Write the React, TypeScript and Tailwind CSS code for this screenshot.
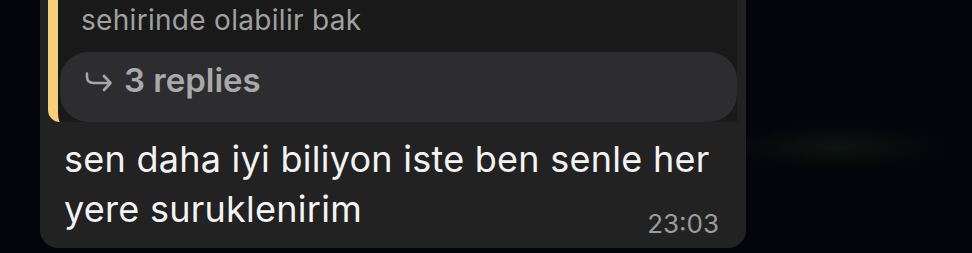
import React from "react";

function ReplyArrow() {
  return (
    <svg width="27" height="22" viewBox="0 0 27 22" fill="none" className="mt-[12px] shrink-0">
      <path
        d="M2 1.5V4.5Q2 11 8.5 11H25.5M19 4L25.5 11L19 18"
        stroke="#a6a6a8"
        strokeWidth="2.6"
        strokeLinecap="round"
        strokeLinejoin="round"
      />
    </svg>
  );
}

export default function App() {
  return (
    <div
      className="h-[253px] w-[972px] overflow-hidden flex flex-col justify-end pb-[5px] pl-[40px] bg-[radial-gradient(ellipse_110px_22px_at_86%_58%,#0e140f_0%,#04050a_100%)] bg-[#04050a]"
      style={{ fontFamily: "Inter, 'Noto Sans', sans-serif" }}
    >
      <div className="w-[706px] shrink-0 bg-[#222222] rounded-b-[18px] pt-[8px] pl-[8px] pr-[9px] pb-[8px]">
        {/* quoted message */}
        <div className="bg-[#191919] border-l-[10px] border-[#f6cd7a] rounded-bl-[12px] pt-[20px]">
          <div className="pl-[23px] h-[36px] leading-[36px] text-[28px] text-[#a0a0a0] tracking-[0.3px]">
            sehirinde olabilir bak
          </div>
          <div className="mt-[14px] ml-[2px] h-[70px] rounded-[28px] bg-[#2d2d2f] flex items-start pt-[8px] pl-[25px] gap-[12px]">
            <ReplyArrow />
            <span className="text-[33px] leading-[40px] font-semibold text-[#a9a9ab]">3 replies</span>
          </div>
        </div>

        {/* message body */}
        <p className="mt-[12px] pl-[16px] pr-[8px] text-[36px] leading-[50px] tracking-[0.26px] text-[#f3f3f3]">
          sen daha iyi biliyon iste ben senle her yere suruklenirim
        </p>
        <div className="-mt-[26px] pr-[18px] text-right text-[26px] leading-[32px] text-[#9b9b9b]">
          23:03
        </div>
      </div>
    </div>
  );
}
